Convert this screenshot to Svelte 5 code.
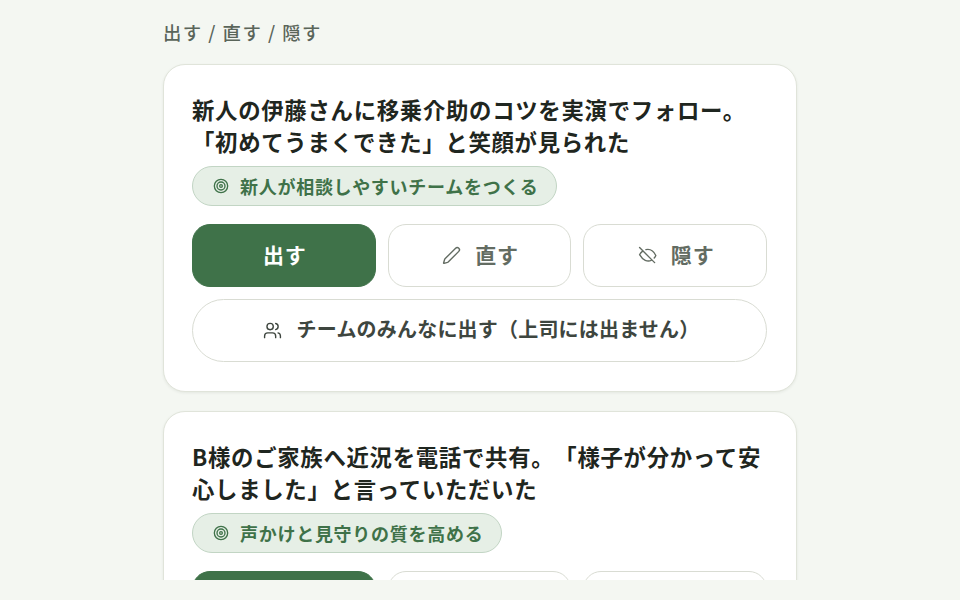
<script lang="ts">
  const cards = [
    {
      text: '新人の伊藤さんに移乗介助のコツを実演でフォロー。「初めてうまくできた」と笑顔が見られた',
      goal: '新人が相談しやすいチームをつくる'
    },
    {
      text: 'B様のご家族へ近況を電話で共有。「様子が分かって安心しました」と言っていただいた',
      goal: '声かけと見守りの質を高める'
    }
  ];
</script>

<div class="page">
  <main class="column">
    <p class="legend">出す / 直す / 隠す</p>

    {#each cards as card}
      <article class="card">
        <h2>{card.text}</h2>
        <div class="goal">
          <svg class="goal-icon" viewBox="0 0 24 24" aria-hidden="true">
            <circle cx="12" cy="12" r="10" />
            <circle cx="12" cy="12" r="6" />
            <circle cx="12" cy="12" r="2" />
          </svg>
          <span>{card.goal}</span>
        </div>

        <div class="actions">
          <button class="btn primary"><span class="label">出す</span></button>
          <button class="btn">
            <svg class="icon" viewBox="0 0 24 24" aria-hidden="true">
              <path d="M21.2 6.8a2.8 2.8 0 0 0-4-4L3.8 16.2a2 2 0 0 0-.5.8l-1.3 4.4a.5.5 0 0 0 .6.6l4.4-1.3a2 2 0 0 0 .8-.5z" />
            </svg>
            <span class="label">直す</span>
          </button>
          <button class="btn">
            <svg class="icon" viewBox="0 0 24 24" aria-hidden="true">
              <path d="M10 4.500c5-1 10 2 12.500 7.500-.5 1.200-1.200 2.300-2 3.200" />
              <path d="M17 18c-5 2.500-11 0-15-7 .8-1.700 2-3 3.500-4.200" />
              <path d="m2 2 19 19" />
            </svg>
            <span class="label">隠す</span>
          </button>
        </div>

        <button class="btn wide">
          <svg class="icon" viewBox="0 0 24 24" aria-hidden="true">
            <path d="M16 21v-2a4 4 0 0 0-4-4H6a4 4 0 0 0-4 4v2" />
            <path d="M16 3.100a4 4 0 0 1 0 7.800" />
            <path d="M22 21v-2a4 4 0 0 0-3-3.900" />
            <circle cx="9" cy="7" r="4" />
          </svg>
          <span class="label">チームのみんなに出す（上司には出ません）</span>
        </button>
      </article>
    {/each}
  </main>
</div>

<style>
  :global(body) {
    background: #f4f7f2;
    font-family: "Noto Sans CJK JP", "Noto Sans", sans-serif;
    text-spacing-trim: space-all;
  }
  .page {
    height: 580px;
    overflow: hidden;
  }
  .column {
    width: 634px;
    margin: 0 auto;
    padding-top: 19px;
  }
  .legend {
    margin: 0 0 19px;
    font-size: 18.4px;
    line-height: 26px;
    font-weight: 500;
    letter-spacing: 0.08em;
    color: #5a655a;
  }
  .card {
    background: #fff;
    border: 1px solid #e0e4da;
    border-radius: 22px;
    padding: 30px 29px 29px 28px;
    margin-bottom: 19px;
    box-shadow: 0 1px 3px rgba(40, 50, 40, 0.08);
  }
  h2 {
    margin: -2px 0 2px;
    font-size: 22.4px;
    line-height: 32px;
    font-weight: 700;
    letter-spacing: 0.7px;
    color: #1f2620;
  }
  .goal {
    display: inline-flex;
    align-items: center;
    gap: 11px;
    height: 40px;
    box-sizing: border-box;
    margin-top: 7px;
    padding: 0 18px 0 20px;
    border: 1px solid #c2d5c4;
    border-radius: 20px;
    background: #e6efe6;
    color: #3f7249;
    font-size: 18px;
    font-weight: 700;
    letter-spacing: 0.04em;
    vertical-align: top;
  }
  .goal-icon {
    width: 16px;
    height: 16px;
    fill: none;
    stroke: currentColor;
    stroke-width: 2;
  }
  .actions {
    display: grid;
    grid-template-columns: repeat(3, 1fr);
    gap: 12px;
    margin-top: 18px;
  }
  .btn {
    display: flex;
    align-items: center;
    justify-content: center;
    gap: 14px;
    height: 63px;
    padding: 0 0 0 2px;
    border: 1px solid #d9dcd3;
    border-radius: 18px;
    background: #fff;
    color: #636c62;
    font-family: inherit;
    font-size: 21px;
    font-weight: 700;
    letter-spacing: 0.04em;
  }
  .label {
    padding-bottom: 4px;
  }
  .primary {
    background: #3f7249;
    border-color: #3f7249;
    color: #fff;
  }
  .wide {
    width: 100%;
    margin-top: 12px;
    padding-left: 3px;
    gap: 15px;
    border-radius: 32px;
    color: #3e463f;
    font-size: 20px;
    letter-spacing: 0.2px;
  }
  .icon {
    width: 19px;
    height: 19px;
    fill: none;
    stroke: currentColor;
    stroke-width: 1.75;
    stroke-linecap: round;
    stroke-linejoin: round;
  }
</style>
